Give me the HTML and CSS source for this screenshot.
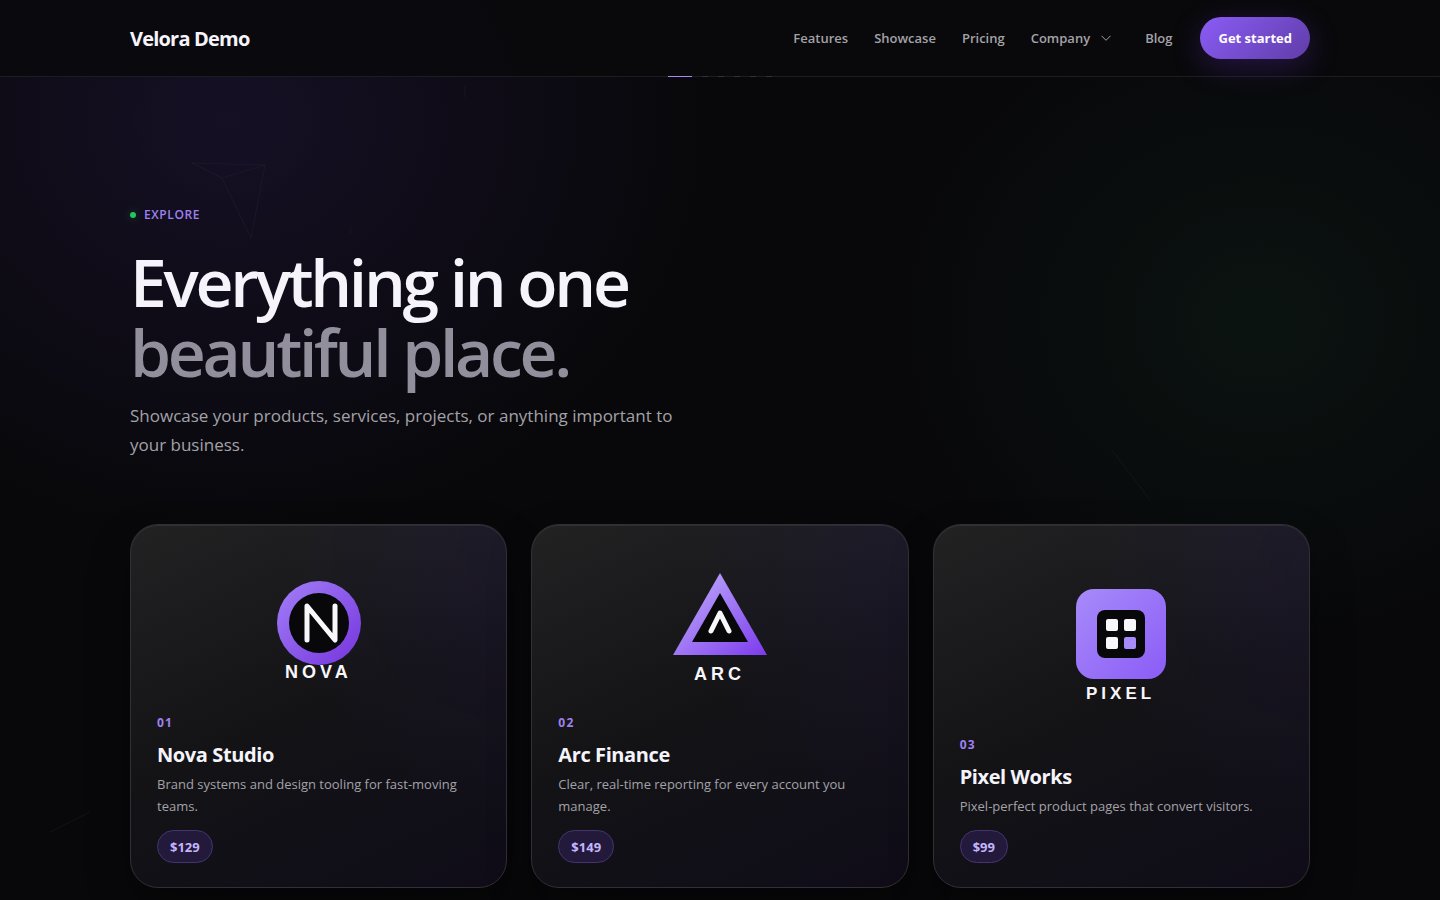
FILE: index.html
```html
<!DOCTYPE html>
<html lang="en">
<head>
<meta charset="utf-8">
<meta name="viewport" content="width=device-width, initial-scale=1">
<title>Velora Demo</title>
<link rel="stylesheet" href="styles.css">
</head>
<body>
<svg class="backdrop" viewBox="0 0 1440 900" preserveAspectRatio="xMinYMin slice" aria-hidden="true">
  <path d="M192 163L265 165L222 178ZM265 165L251 238L222 178M465 86V97M351 226V234M50 832L90 812M1112 450L1150 500"/>
</svg>
<header class="site-header">
  <div class="container header-row">
    <a class="brand" href="#">Velora Demo</a>
    <nav class="nav" aria-label="Main">
      <a class="nav-link" href="#">Features</a>
      <a class="nav-link" href="#">Showcase</a>
      <a class="nav-link" href="#">Pricing</a>
      <button class="nav-link nav-toggle" type="button">Company
        <svg width="10" height="6" viewBox="0 0 10 6" aria-hidden="true"><path d="M.5 .8L5 5.3L9.5 .8"/></svg>
      </button>
      <a class="nav-link" href="#">Blog</a>
      <a class="cta" href="#">Get started</a>
    </nav>
  </div>
  <div class="slides" aria-hidden="true"><i class="slide slide-on"></i><i class="slide"></i><i class="slide"></i><i class="slide"></i><i class="slide"></i><i class="slide"></i></div>
</header>
<main class="container">
  <section class="hero">
    <p class="eyebrow">Explore</p>
    <h1 class="headline">Everything in one<br><span class="headline-muted">beautiful place.</span></h1>
    <p class="lead">Showcase your products, services, projects, or anything important to your business.</p>
  </section>
  <section class="cards" aria-label="Projects">
    <article class="card">
      <div class="card-media">
        <svg class="logo" viewBox="0 0 200 140" role="img" aria-label="Nova">
          <defs><linearGradient id="nova" x1="0" y1="0" x2="1" y2="1"><stop offset="0" stop-color="#a27ff8"/><stop offset="1" stop-color="#7534dc"/></linearGradient></defs>
          <circle cx="100" cy="68" r="42" fill="url(#nova)"/>
          <circle cx="100" cy="68" r="30" fill="#08080b"/>
          <path class="stroke" d="M88 85V51L116 85V51"/>
          <text class="logo-text" x="66" y="123">NOVA</text>
        </svg>
      </div>
      <p class="card-index">01</p>
      <h2 class="card-title">Nova Studio</h2>
      <p class="card-text">Brand systems and design tooling for fast-moving teams.</p>
      <span class="price">$129</span>
    </article>
    <article class="card">
      <div class="card-media">
        <svg class="logo" viewBox="0 0 200 140" role="img" aria-label="Arc">
          <defs><linearGradient id="arc" x1="0" y1="0" x2="1" y2="1"><stop offset="0" stop-color="#c4b5fd"/><stop offset="1" stop-color="#7c3aed"/></linearGradient></defs>
          <path d="M100 18L147 100H53Z" fill="url(#arc)"/>
          <path d="M100 38L128 87H72Z" fill="#08080b"/>
          <path class="stroke" d="M91 76L100 58L109 76"/>
          <text class="logo-text" x="74" y="125">ARC</text>
        </svg>
      </div>
      <p class="card-index">02</p>
      <h2 class="card-title">Arc Finance</h2>
      <p class="card-text">Clear, real-time reporting for every account you manage.</p>
      <span class="price">$149</span>
    </article>
    <article class="card">
      <div class="card-media">
        <svg class="logo" viewBox="0 0 200 140" role="img" aria-label="Pixel">
          <defs><linearGradient id="pixel" x1="0" y1="0" x2="1" y2="1"><stop offset="0" stop-color="#a78bfa"/><stop offset="1" stop-color="#8b5cf6"/></linearGradient></defs>
          <rect x="55" y="23" width="90" height="90" rx="18" fill="url(#pixel)"/>
          <rect x="76" y="44" width="48" height="48" rx="8" fill="#08080b"/>
          <g fill="#f8f7fc"><rect x="85" y="53" width="12" height="12" rx="2"/><rect x="103" y="53" width="12" height="12" rx="2"/><rect x="85" y="71" width="12" height="12" rx="2"/></g>
          <rect x="103" y="71" width="12" height="12" rx="2" fill="#a78bfa"/>
          <text class="logo-text logo-text-small" x="65" y="133">PIXEL</text>
        </svg>
      </div>
      <p class="card-index">03</p>
      <h2 class="card-title">Pixel Works</h2>
      <p class="card-text">Pixel-perfect product pages that convert visitors.</p>
      <span class="price">$99</span>
    </article>
  </section>
</main>
</body>
</html>
```
FILE: styles.css
```css
* { box-sizing: border-box; }

body {
  margin: 0;
  min-height: 100vh;
  position: relative;
  color: #f6f4fb;
  font-family: "Segoe UI", "Open Sans", sans-serif;
  background:
    radial-gradient(ellipse 480px 420px at 230px 120px, rgba(100, 60, 190, 0.15), transparent),
    radial-gradient(ellipse 360px 320px at 1260px 320px, rgba(34, 110, 70, 0.11), transparent),
    #08080a;
}

h1, h2, p { margin: 0; }
a { color: inherit; text-decoration: none; }

.container {
  width: 100%;
  max-width: 1228px;
  margin: 0 auto;
  padding: 0 24px;
}

.backdrop {
  position: absolute;
  inset: 0;
  width: 100%;
  height: 100%;
  z-index: -1;
  fill: none;
  stroke: rgba(190, 180, 220, 0.05);
}

.site-header {
  position: relative;
  background: rgba(9, 9, 12, 0.86);
  border-bottom: 1px solid #1d1c22;
}

.header-row {
  display: flex;
  align-items: center;
  justify-content: space-between;
  height: 76px;
}

.brand { font-size: 20px; font-weight: 700; letter-spacing: -0.04em; }

.nav { display: flex; align-items: center; gap: 26px; }

.nav-link {
  color: #a3a2a8;
  font-family: inherit;
  font-size: 13px;
  line-height: 20px;
  font-weight: 600;
}

.nav-toggle {
  display: flex;
  align-items: center;
  gap: 11px;
  padding: 0 8px 0 0;
  border: 0;
  background: none;
}

.nav-toggle svg { fill: none; stroke: currentColor; }

.cta {
  margin-left: 2px;
  padding: 11px 18px;
  border-radius: 21px;
  color: #fff;
  font-size: 13px;
  line-height: 20px;
  font-weight: 700;
  background: linear-gradient(135deg, #8b5cf6, #5f3da8);
  box-shadow: 0 8px 30px rgba(124, 58, 237, 0.25);
}

.slides {
  position: absolute;
  left: 0;
  right: 0;
  bottom: -1px;
  display: flex;
  justify-content: center;
  gap: 10px;
}

.slide { width: 6px; height: 1px; background: #34333b; }
.slide-on { width: 24px; background: #a78bfa; }

.hero {
  max-width: 560px;
  padding-top: 129px;
}

.eyebrow {
  display: flex;
  align-items: center;
  gap: 8px;
  color: #9d82ee;
  font-size: 12px;
  line-height: 18px;
  font-weight: 600;
  letter-spacing: 0.05em;
  text-transform: uppercase;
}

.eyebrow::before {
  content: "";
  width: 6px;
  height: 6px;
  border-radius: 50%;
  background: #22c55e;
  box-shadow: 0 0 10px rgba(34, 197, 94, 0.4);
}

.headline {
  margin-top: 22px;
  font-size: 66px;
  line-height: 70px;
  font-weight: 600;
  letter-spacing: -0.05em;
  white-space: nowrap;
}

.headline-muted { color: #918f9b; }

.lead {
  margin-top: 15px;
  color: #a3a2a8;
  font-size: 17px;
  line-height: 29px;
}

.cards {
  display: grid;
  grid-template-columns: repeat(3, 1fr);
  gap: 24px;
  padding: 65px 0 12px;
}

.card {
  display: flex;
  flex-direction: column;
  align-items: flex-start;
  padding: 24px 26px;
  border: 1px solid #303035;
  border-radius: 28px;
  background:
    radial-gradient(ellipse 60% 70% at 100% 10%, rgba(100, 60, 220, 0.08), transparent),
    linear-gradient(155deg, #222223 0%, #131316 50%, #0f0c18 100%);
  box-shadow: inset 0 1px 0 rgba(255, 255, 255, 0.07), 0 20px 40px rgba(0, 0, 0, 0.35);
}

.card-media {
  flex: 1;
  display: flex;
  align-items: center;
  justify-content: center;
  width: 100%;
  min-height: 152px;
  margin-bottom: 13px;
}

.logo { width: 200px; height: 140px; }
.logo-text { fill: #f8f7fc; font: 700 18px "Liberation Sans", Arial, sans-serif; letter-spacing: 4px; }
.logo-text-small { font-size: 17px; }

.stroke {
  fill: none;
  stroke: #f8f7fc;
  stroke-width: 5px;
  stroke-linecap: round;
  stroke-linejoin: round;
}

.card-index {
  color: #9d82ee;
  font-size: 12px;
  line-height: 18px;
  font-weight: 700;
  letter-spacing: 0.1em;
}

.card-title {
  margin-top: 8px;
  font-size: 20px;
  line-height: 30px;
  font-weight: 700;
  letter-spacing: -0.02em;
}

.card-text {
  margin-top: 3px;
  color: #a3a2a8;
  font-size: 13px;
  line-height: 22px;
}

.price {
  margin-top: 13px;
  padding: 7px 12px 5px;
  border: 1px solid #44356f;
  border-radius: 17px;
  color: #c4b5fd;
  background: #231a3b;
  font-size: 13px;
  line-height: 19px;
  font-weight: 700;
}

@media (max-width: 900px) {
  .cards { grid-template-columns: 1fr; }
  .headline { white-space: normal; }
}
```
